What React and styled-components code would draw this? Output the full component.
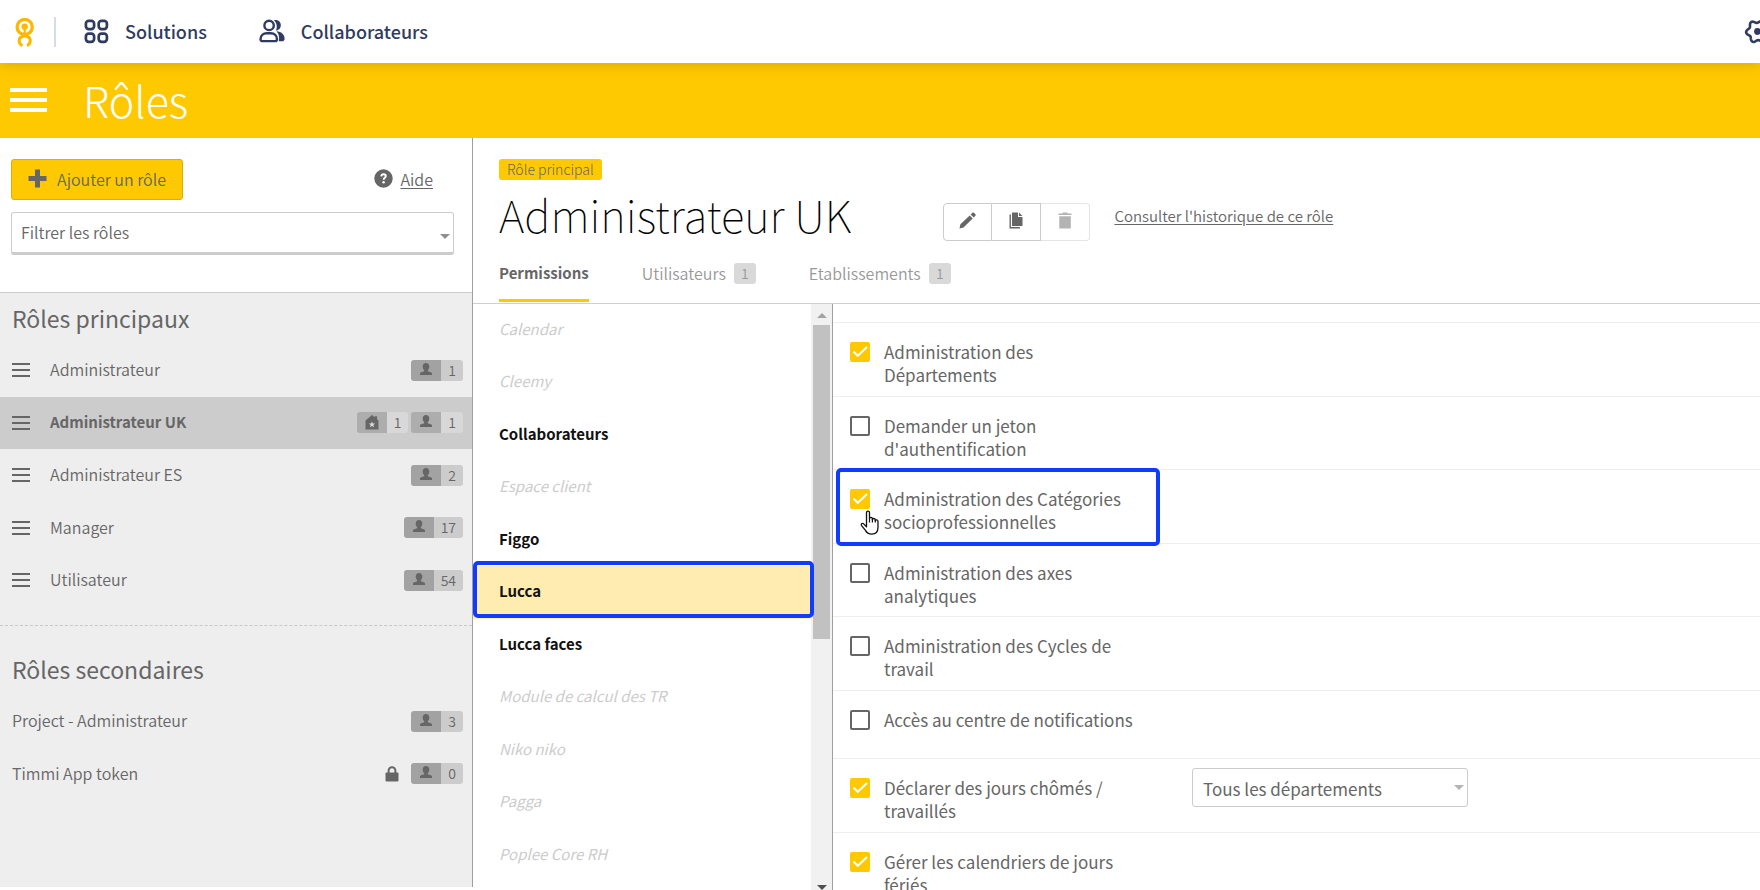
import React, { useState } from "react";
import styled, { createGlobalStyle, css } from "styled-components";

const GlobalStyle = createGlobalStyle`
  *, *::before, *::after {
    box-sizing: border-box;
  }

  body {
    margin: 0;
    background: #ffffff;
    color: #666666;
    font-family: "Noto Sans CJK SC", "Source Sans Pro", "Open Sans", sans-serif;
    font-size: 16px;
  }

  button, input, select {
    font: inherit;
    color: inherit;
  }

  h1, h2, ul {
    margin: 0;
    padding: 0;
  }

  ul {
    list-style: none;
  }
`;

const Page = styled.div`
  display: flex;
  flex-direction: column;
  height: 100vh;
  overflow: hidden;
`;

/* Top navigation */

const TopBar = styled.nav`
  display: flex;
  align-items: center;
  flex: none;
  height: 63px;
  padding-left: 15px;
  color: #303b60;
  background: #ffffff;
  box-shadow: 0 2px 12px rgba(80, 60, 0, 0.2);
  z-index: 1;
`;

const LogoLink = styled.a`
  display: flex;
  padding-right: 19px;
  margin-right: 28px;
  border-right: 2px solid #d8dce9;
`;

const TopLink = styled.a`
  display: flex;
  align-items: center;
  gap: 16px;
  margin-right: 52px;
  padding-bottom: 1px;
  color: inherit;
  font-size: 18px;
  font-weight: 500;
  line-height: 26px;
  text-decoration: none;
`;

const SettingsButton = styled.button`
  display: flex;
  flex: none;
  margin: 0 -11px 0 auto;
  padding: 0;
  border: none;
  background: none;
  cursor: pointer;
`;

const Banner = styled.header`
  display: flex;
  align-items: center;
  gap: 36px;
  flex: none;
  height: 75px;
  padding: 0 0 2px 10px;
  color: #ffffff;
  background: #ffc901;
`;

const BannerTitle = styled.h1`
  padding-bottom: 2px;
  font-size: 43px;
  font-weight: 300;
  line-height: 60px;
`;

const MenuButton = styled.button`
  display: flex;
  flex-direction: column;
  gap: ${({ $small }) => ($small ? 4 : 6)}px;
  width: ${({ $small }) => ($small ? 18 : 37)}px;
  padding: 0;
  border: none;
  background: none;
  cursor: pointer;

  span {
    height: ${({ $small }) => ($small ? 2 : 4)}px;
    background: currentColor;
  }
`;

const Body = styled.div`
  display: flex;
  flex: 1;
  min-height: 0;
`;

/* Roles sidebar */

const Sidebar = styled.aside`
  display: flex;
  flex-direction: column;
  flex: none;
  width: 473px;
  margin-bottom: 3px;
  border-right: 1px solid #9f9f9f;
  font-weight: 350;
`;

const SidebarTools = styled.div`
  padding: 21px 18px 37px 11px;
  border-bottom: 1px solid #cccccc;
`;

const ToolsRow = styled.div`
  display: flex;
  align-items: center;
  justify-content: space-between;
  margin-bottom: 12px;
  padding-right: 21px;
`;

const AddButton = styled.button`
  display: flex;
  align-items: center;
  gap: 10px;
  height: 41px;
  padding: 0 16px 2px;
  border: 1px solid #e0ad00;
  border-radius: 3px;
  background: #ffc901;
  cursor: pointer;
`;

const HelpLink = styled.a`
  display: flex;
  align-items: center;
  gap: 7px;
  padding-bottom: 2px;
  color: inherit;
  text-underline-offset: 2px;
`;

const SelectWrap = styled.div`
  position: relative;
  width: ${({ $width }) => $width};

  &::after {
    content: "";
    position: absolute;
    right: 4px;
    top: ${({ $thick }) => ($thick ? 22 : 17)}px;
    border: 5px solid transparent;
    border-bottom: none;
    border-top-color: ${({ $thick }) => ($thick ? "#8f8f8f" : "#b4b4b4")};
    pointer-events: none;
  }
`;

const Select = styled.select`
  display: block;
  width: 100%;
  height: ${({ $thick }) => ($thick ? 43 : 39)}px;
  padding: ${({ $thick }) => ($thick ? "0 24px 2px 9px" : "2px 24px 0 10px")};
  border: 1px solid #cccccc;
  border-bottom-width: ${({ $thick }) => ($thick ? 3 : 1)}px;
  border-radius: 3px;
  background: #ffffff;
  font-size: ${({ $thick }) => ($thick ? 16 : 17)}px;
  appearance: none;
`;

const RoleLists = styled.div`
  flex: 1;
  background: #eeeeee;
`;

const RoleSection = styled.section`
  & + & {
    margin-top: 18px;
    padding-top: 18px;
    border-top: 1px dashed #c8c8c8;
  }
`;

const SectionTitle = styled.h2`
  height: 51px;
  padding-left: 12px;
  font-size: 23px;
  font-weight: 400;
  line-height: 50px;
`;

const RoleRow = styled.li`
  display: flex;
  align-items: center;
  height: 52px;
  padding: 0 9px 1px 12px;
  background: ${({ $active }) => ($active ? "#cccccc" : "transparent")};

  &:nth-child(odd) {
    height: 53px;
  }
`;

const RoleLink = styled.a`
  flex: 1;
  padding: 0 0 2px ${({ $draggable }) => ($draggable ? 20 : 0)}px;
  color: inherit;
  line-height: 24px;
  text-decoration: none;

  ${({ $active }) =>
    $active &&
    css`
      font-size: 15px;
      font-weight: 700;
    `}
`;

const Counter = styled.span`
  display: flex;
  height: 21px;
  margin-left: 3px;
  border-radius: 3px;
  overflow: hidden;
  font-size: 14px;
  line-height: 21px;
`;

const CounterIcon = styled.span`
  display: flex;
  justify-content: center;
  width: 30px;
  padding-top: 3px;
  background: ${({ $active }) => ($active ? "#adadad" : "#a2a2a2")};
`;

const CounterValue = styled.span`
  padding: 0 7px;
  background: ${({ $active }) => ($active ? "#d8d8d8" : "#cccccc")};
`;

const LockIcon = styled.svg`
  margin-right: 9px;
`;

/* Role detail */

const Detail = styled.main`
  display: flex;
  flex-direction: column;
  flex: 1;
  min-width: 0;
`;

const DetailHeader = styled.header`
  flex: none;
  padding: 21px 26px 1px;
  border-bottom: 1px solid #cfcfcf;
`;

const Tag = styled.span`
  display: block;
  width: fit-content;
  padding: 0 8px;
  border-radius: 3px;
  background: #ffc901;
  font-size: 14px;
  font-weight: 300;
  line-height: 21px;
`;

const TitleRow = styled.div`
  display: flex;
  align-items: flex-start;
  margin-top: 10px;
`;

const RoleTitle = styled.h2`
  margin-right: 92px;
  color: #000000;
  font-size: 44px;
  font-weight: 100;
  line-height: 48px;
  white-space: nowrap;
`;

const ActionGroup = styled.div`
  display: flex;
  margin-top: 13px;
`;

const ActionButton = styled.button`
  display: flex;
  justify-content: center;
  width: 49px;
  height: 38px;
  padding: 8px 0 0;
  border: 1px solid #cccccc;
  background: #ffffff;

  & + & {
    border-left-width: 0;
  }

  &:first-child {
    border-radius: 4px 0 0 4px;
  }

  &:last-child {
    border-radius: 0 4px 4px 0;
  }

  &:disabled {
    color: #b3b3b3;
    border-color: #e5e5e5;
  }
`;

const HistoryLink = styled.a`
  margin: 16px 0 0 24px;
  color: inherit;
  font-size: 15px;
  font-weight: 350;
  line-height: 20px;
  text-underline-offset: 2px;
`;

const Tabs = styled.div`
  display: flex;
  gap: 53px;
  margin-top: 20px;
`;

const Tab = styled.button`
  display: flex;
  align-items: center;
  gap: 8px;
  padding: 0 0 14px;
  border: none;
  border-bottom: 3px solid ${({ $active }) => ($active ? "#ffc901" : "transparent")};
  background: none;
  color: ${({ $active }) => ($active ? "#666666" : "#999999")};
  font-size: ${({ $active }) => ($active ? 15 : 16)}px;
  font-weight: ${({ $active }) => ($active ? 700 : 350)};
  line-height: 24px;
  cursor: pointer;
`;

const TabCount = styled.span`
  width: 22px;
  border-radius: 3px;
  background: #d9d9d9;
  font-size: 14px;
  line-height: 21px;
  text-align: center;
`;

const Columns = styled.div`
  display: flex;
  flex: 1;
  min-height: 0;
`;

const AppList = styled.ul`
  flex: none;
  width: 338px;
`;

const AppItem = styled.li`
  position: relative;
  height: 52px;
  background: ${({ $selected }) => ($selected ? "#ffecb0" : "transparent")};

  &:nth-child(even) {
    height: 53px;
  }
`;

const AppLink = styled.a`
  display: block;
  padding-left: 26px;
  color: ${({ $off }) => ($off ? "#cccccc" : "#111111")};
  font-size: 15px;
  font-style: ${({ $off }) => ($off ? "italic" : "normal")};
  font-weight: ${({ $off }) => ($off ? 400 : 700)};
  line-height: 50px;
  text-decoration: none;
`;

const Highlight = styled.span`
  position: absolute;
  z-index: 2;
  border: 4px solid #0f3cff;
  border-radius: 5px;
  pointer-events: none;
`;

const AppHighlight = styled(Highlight)`
  top: -5px;
  bottom: 1px;
  left: 0;
  right: -3px;
`;

const PermissionHighlight = styled(Highlight)`
  top: -2px;
  bottom: -3px;
  left: 3px;
  width: 324px;
`;

const ScrollTrack = styled.div`
  display: flex;
  flex-direction: column;
  flex: none;
  align-items: center;
  width: 22px;
  padding: 9px 0 0;
  border-right: 1px solid #9f9f9f;
  background: #f1f1f1;
`;

const ScrollArrow = styled.span`
  border: 5px solid transparent;
  ${({ $down }) =>
    $down
      ? css`
          margin-top: auto;
          border-top-color: #505050;
          border-bottom: none;
        `
      : css`
          border-bottom-color: #a3a3a3;
          border-top: none;
        `}
`;

const ScrollThumb = styled.div`
  width: 17px;
  height: 314px;
  margin-top: 7px;
  background: #c1c1c1;
`;

const PermissionList = styled.ul`
  flex: 1;
  min-width: 0;
  padding-top: 18px;
`;

const PermissionRow = styled.li`
  position: relative;
  display: flex;
  align-items: flex-start;
  min-height: 68px;
  padding: 0 17px;
  border-top: 1px solid #eeeeee;
`;

const PermissionLabel = styled.label`
  display: flex;
  align-items: flex-start;
  gap: 14px;
  width: 292px;
  margin-right: 50px;
  padding: 17px 0 10px;
  font-size: 17px;
  line-height: 23px;

  ${PermissionRow}:nth-child(even) & {
    padding-bottom: 9px;
  }
`;

const CheckWrap = styled.span`
  position: relative;
  flex: none;
  width: 20px;
  height: 20px;
  margin-top: 2px;

  svg {
    position: absolute;
    inset: 0;
    pointer-events: none;
  }
`;

const Checkbox = styled.input`
  display: block;
  width: 20px;
  height: 20px;
  margin: 0;
  border: 2px solid #666666;
  border-radius: 2px;
  background: #ffffff;
  appearance: none;

  &:checked {
    border-color: #ffc901;
    background: #ffc901;
  }
`;

const ScopeField = styled.div`
  padding-top: 9px;
`;

const Pointer = styled.svg`
  position: absolute;
  top: 40px;
  left: 27px;
  z-index: 3;
  pointer-events: none;
`;

const Logo = () => (
  <svg width="20" height="30" viewBox="0 0 20 30" fill="none" stroke="#ffb700">
    <circle cx="9.7" cy="10" r="7.6" strokeWidth="3.3" />
    <circle cx="9.7" cy="9.6" r="3.2" fill="#ffb700" stroke="none" />
    <path d="M9.7 11v6.5" strokeWidth="2.2" />
    <path d="M7.400 28.600A5.200 5.200 0 0 1 6 19.800M13.400 19.800A5.200 5.200 0 0 1 12 28.600" strokeWidth="3" />
    <path d="M5.500 20.600Q9.700 17.400 13.900 20.600" strokeWidth="3" />
  </svg>
);

const GridIcon = () => (
  <svg width="25" height="25" viewBox="0 0 25 25" fill="none" stroke="currentColor" strokeWidth="2.7">
    <rect x="1.900" y="1.900" width="8.200" height="8.200" rx="2.800" />
    <rect x="14.700" y="1.900" width="8.200" height="8.200" rx="2.800" />
    <rect x="1.900" y="14.700" width="8.200" height="8.200" rx="2.800" />
    <rect x="14.700" y="14.700" width="8.200" height="8.200" rx="2.800" />
  </svg>
);

const PeopleIcon = () => (
  <svg width="26" height="24" viewBox="0 0 26 24" fill="none">
    <path
      d="M15 1.300c4-.9 6.800 1.600 6.800 4.900 0 3-2 5.200-4.800 5.300 1.400-3.300 1-7.300-2-10.200zM17.500 12.200c4.800.2 8 3.400 8.100 7.200.1 1.900-1 2.800-2.500 2.800h-3.300c1-4.300-.1-7.600-2.300-10z"
      fill="currentColor"
    />
    <circle cx="10.100" cy="6.400" r="4.700" stroke="currentColor" strokeWidth="2.400" />
    <path
      d="M1.500 20.200c0-3.700 2.800-6 6.300-6h4c3.500 0 6.200 2.300 6.200 6 0 1.200-.8 1.900-1.900 1.900H3.400c-1.100 0-1.900-.7-1.900-1.900z"
      stroke="currentColor"
      strokeWidth="2.400"
    />
  </svg>
);

// Six soft lobes around the hub
const gearPath = Array.from({ length: 73 }, (_, i) => {
  const a = (i * 5 * Math.PI) / 180;
  const r = 10 + 1.4 * Math.cos(6 * a + 0.4);
  return `${i ? "L" : "M"}${(13.5 + r * Math.cos(a)).toFixed(2)} ${(13.5 + r * Math.sin(a)).toFixed(2)}`;
}).join("");

const GearIcon = () => (
  <svg width="27" height="27" viewBox="0 0 27 27" fill="none">
    <path d={`${gearPath}Z`} stroke="currentColor" strokeWidth="2.6" strokeLinejoin="round" />
    <circle cx="13.5" cy="13.5" r="3.4" fill="currentColor" />
  </svg>
);

const PlusIcon = () => (
  <svg width="19" height="19" viewBox="0 0 19 19" fill="currentColor">
    <path d="M7 0.500h5v6.500h6.500v5H12v6.500H7V12H0.500V7H7z" />
  </svg>
);

const HelpIcon = () => (
  <svg width="19" height="19" viewBox="0 0 19 19" fill="none">
    <circle cx="9.500" cy="9.500" r="9.200" fill="currentColor" />
    <path d="M7.300 7.400c.1-1.500 1.100-2.200 2.300-2.200 1.300 0 2.200.8 2.200 1.900 0 1.600-2.100 1.800-2.100 3.700" stroke="#fff" strokeWidth="1.900" />
    <circle cx="9.600" cy="13.200" r="1.200" fill="#fff" />
  </svg>
);

const PersonIcon = () => (
  <svg width="12" height="13" viewBox="0 0 12 13" fill="currentColor">
    <path d="M6 0C8 0 9.300 1.300 9.300 3.400c0 1.700-.6 2.900-1.500 3.700v1.200l2.900.9c.9.300 1.300.8 1.300 1.600V12H0v-1.200c0-.8.4-1.300 1.300-1.600l2.900-.9V7.100C3.300 6.300 2.700 5.100 2.700 3.400 2.700 1.300 4 0 6 0z" />
  </svg>
);

const HouseIcon = () => (
  <svg width="14" height="15" viewBox="0 0 14 15" fill="currentColor">
    <path d="M7 0l2.700 2.200V1.300h2.300v2.900L13.500 5.500v9H.5v-9z" />
    <path d="M7 6.400l.9 2 2.200.2-1.700 1.400.6 2.200-2-1.200-2 1.200.6-2.200-1.700-1.400 2.200-.2z" fill="#d8d8d8" />
  </svg>
);

const Lock = () => (
  <LockIcon width="14" height="16" viewBox="0 0 14 16">
    <path d="M3.600 8V4.600a3.400 3.400 0 0 1 6.800 0V8" fill="none" stroke="currentColor" strokeWidth="2" />
    <rect x="0.500" y="6.500" width="13" height="9" rx="1" fill="currentColor" />
  </LockIcon>
);

const PencilIcon = () => (
  <svg width="17" height="17" viewBox="0 0 17 17" fill="currentColor">
    <path d="M0.500 16.500l.9-4.200 9.300-8.900 3 3.100-9.200 9.100zM11.600 2.600L13.400.800c.5-.5 1-.5 1.500 0l1.500 1.500c.5.500.5 1 0 1.500l-1.700 1.800z" />
  </svg>
);

const CopyIcon = () => (
  <svg width="14" height="17" viewBox="0 0 14 17" fill="currentColor">
    <path d="M3 .500h6V5h4.500v9H3zM10 .500L13.500 4H10z" />
    <path d="M0.500 2.500h1.400v12.600h9v1.400H.5z" />
  </svg>
);

const TrashIcon = () => (
  <svg width="14" height="17" viewBox="0 0 14 17" fill="currentColor">
    <path d="M4.500.500h5v1H13.500v1.600H.500V1.500h4zM1.300 4.300h11.500v12.200H1.300z" />
  </svg>
);

const PointerIcon = () => (
  <Pointer width="20" height="26" viewBox="0 0 20 26">
    <path
      d="M6.500 2.700c0-2.200 3-2.200 3 0v6c0-1.700 2.900-1.700 2.900.2v.6c.2-1.500 2.900-1.300 2.900.5v.7c.3-1.300 2.700-1.100 2.700.8v5.700c0 4.300-2.500 6.900-6.200 6.900-3.400 0-5.200-1.300-6.500-4L1.400 15.300c-.7-1.500 1.200-2.700 2.300-1.400L6.500 16.700z"
      fill="#fff"
      stroke="#111"
      strokeWidth="1.300"
      strokeLinejoin="round"
    />
    <path d="M9.500 8.500v4M12.400 9v3.500M15.300 10v2.500" stroke="#111" strokeWidth="1.200" />
  </Pointer>
);

const mainRoles = [
  { name: "Administrateur", users: 1 },
  { name: "Administrateur UK", users: 1, entities: 1 },
  { name: "Administrateur ES", users: 2 },
  { name: "Manager", users: 17 },
  { name: "Utilisateur", users: 54 },
];

const secondaryRoles = [
  { name: "Project - Administrateur", users: 3 },
  { name: "Timmi App token", users: 0, locked: true },
];

const apps = [
  { name: "Calendar", off: true },
  { name: "Cleemy", off: true },
  { name: "Collaborateurs" },
  { name: "Espace client", off: true },
  { name: "Figgo" },
  { name: "Lucca" },
  { name: "Lucca faces" },
  { name: "Module de calcul des TR", off: true },
  { name: "Niko niko", off: true },
  { name: "Pagga", off: true },
  { name: "Poplee Core RH", off: true },
];

const initialPermissions = [
  { label: "Administration des Départements", checked: true },
  { label: "Demander un jeton d'authentification", checked: false },
  { label: "Administration des Catégories socioprofessionnelles", checked: true, highlighted: true },
  { label: "Administration des axes analytiques", checked: false },
  { label: "Administration des Cycles de travail", checked: false },
  { label: "Accès au centre de notifications", checked: false },
  { label: "Déclarer des jours chômés / travaillés", checked: true, scope: "Tous les départements" },
  { label: "Gérer les calendriers de jours fériés", checked: true },
];

const Burger = ({ small, label }) => (
  <MenuButton type="button" $small={small} aria-label={label}>
    <span />
    <span />
    <span />
  </MenuButton>
);

const RoleItem = ({ role, draggable, active }) => (
  <RoleRow $active={active}>
    {draggable && <Burger small label={`Déplacer ${role.name}`} />}
    <RoleLink href="#role" $draggable={draggable} $active={active}>
      {role.name}
    </RoleLink>
    {role.locked && <Lock />}
    {role.entities !== undefined && (
      <Counter>
        <CounterIcon $active={active}>
          <HouseIcon />
        </CounterIcon>
        <CounterValue $active={active}>{role.entities}</CounterValue>
      </Counter>
    )}
    <Counter>
      <CounterIcon $active={active}>
        <PersonIcon />
      </CounterIcon>
      <CounterValue $active={active}>{role.users}</CounterValue>
    </Counter>
  </RoleRow>
);

const App = () => {
  const [permissions, setPermissions] = useState(initialPermissions);
  const [selectedApp, setSelectedApp] = useState("Lucca");

  const togglePermission = (label) => {
    setPermissions((prev) => prev.map((p) => (p.label === label ? { ...p, checked: !p.checked } : p)));
  };

  return (
    <Page>
      <GlobalStyle />
      <TopBar>
        <LogoLink href="#home" aria-label="Accueil">
          <Logo />
        </LogoLink>
        <TopLink href="#solutions">
          <GridIcon />
          Solutions
        </TopLink>
        <TopLink href="#collaborateurs">
          <PeopleIcon />
          Collaborateurs
        </TopLink>
        <SettingsButton type="button" aria-label="Paramètres">
          <GearIcon />
        </SettingsButton>
      </TopBar>

      <Banner>
        <Burger label="Menu" />
        <BannerTitle>Rôles</BannerTitle>
      </Banner>

      <Body>
        <Sidebar>
          <SidebarTools>
            <ToolsRow>
              <AddButton type="button">
                <PlusIcon />
                Ajouter un rôle
              </AddButton>
              <HelpLink href="#aide">
                <HelpIcon />
                Aide
              </HelpLink>
            </ToolsRow>
            <SelectWrap $thick $width="100%">
              <Select $thick aria-label="Filtrer les rôles">
                <option>Filtrer les rôles</option>
              </Select>
            </SelectWrap>
          </SidebarTools>

          <RoleLists>
            <RoleSection>
              <SectionTitle>Rôles principaux</SectionTitle>
              <ul>
                {mainRoles.map((role) => (
                  <RoleItem key={role.name} role={role} draggable active={role.name === "Administrateur UK"} />
                ))}
              </ul>
            </RoleSection>
            <RoleSection>
              <SectionTitle>Rôles secondaires</SectionTitle>
              <ul>
                {secondaryRoles.map((role) => (
                  <RoleItem key={role.name} role={role} />
                ))}
              </ul>
            </RoleSection>
          </RoleLists>
        </Sidebar>

        <Detail>
          <DetailHeader>
            <Tag>Rôle principal</Tag>
            <TitleRow>
              <RoleTitle>Administrateur UK</RoleTitle>
              <ActionGroup>
                <ActionButton type="button" aria-label="Modifier">
                  <PencilIcon />
                </ActionButton>
                <ActionButton type="button" aria-label="Dupliquer">
                  <CopyIcon />
                </ActionButton>
                <ActionButton type="button" aria-label="Supprimer" disabled>
                  <TrashIcon />
                </ActionButton>
              </ActionGroup>
              <HistoryLink href="#historique">Consulter l'historique de ce rôle</HistoryLink>
            </TitleRow>
            <Tabs>
              <Tab type="button" $active>
                Permissions
              </Tab>
              <Tab type="button">
                Utilisateurs <TabCount>1</TabCount>
              </Tab>
              <Tab type="button">
                Etablissements <TabCount>1</TabCount>
              </Tab>
            </Tabs>
          </DetailHeader>

          <Columns>
            <AppList>
              {apps.map((app) => (
                <AppItem key={app.name} $selected={app.name === selectedApp}>
                  <AppLink href="#app" $off={app.off} onClick={() => setSelectedApp(app.name)}>
                    {app.name}
                  </AppLink>
                  {app.name === selectedApp && <AppHighlight />}
                </AppItem>
              ))}
            </AppList>
            <ScrollTrack aria-hidden="true">
              <ScrollArrow />
              <ScrollThumb />
              <ScrollArrow $down />
            </ScrollTrack>

            <PermissionList>
              {permissions.map((p) => (
                <PermissionRow key={p.label}>
                  <PermissionLabel>
                    <CheckWrap>
                      <Checkbox type="checkbox" checked={p.checked} onChange={() => togglePermission(p.label)} />
                      {p.checked && (
                        <svg width="20" height="20" viewBox="0 0 20 20" fill="none" stroke="#fff" strokeWidth="2">
                          <path d="M3.500 9.500l4.300 4.300L17 5" />
                        </svg>
                      )}
                    </CheckWrap>
                    {p.label}
                  </PermissionLabel>
                  {p.scope && (
                    <ScopeField>
                      <SelectWrap $width="276px">
                        <Select aria-label="Périmètre">
                          <option>{p.scope}</option>
                        </Select>
                      </SelectWrap>
                    </ScopeField>
                  )}
                  {p.highlighted && (
                    <>
                      <PermissionHighlight />
                      <PointerIcon />
                    </>
                  )}
                </PermissionRow>
              ))}
            </PermissionList>
          </Columns>
        </Detail>
      </Body>
    </Page>
  );
};

export default App;
